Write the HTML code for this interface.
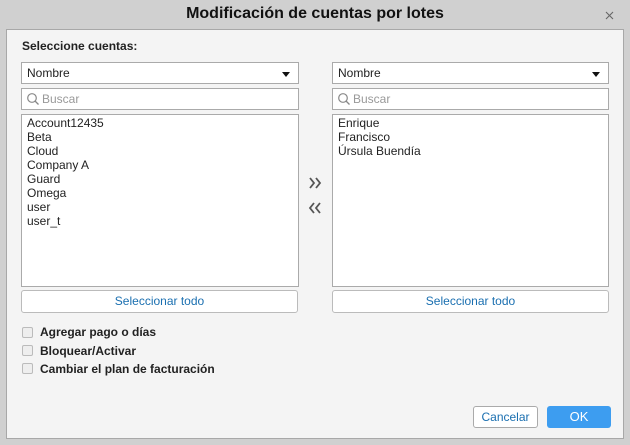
<!DOCTYPE html>
<html><head><style>
*{box-sizing:border-box;margin:0;padding:0}
body{width:630px;height:445px;background:#d0d0d0;font-family:"Liberation Sans",sans-serif;font-size:12px;color:#222;position:relative;overflow:hidden}
.abs{position:absolute}
.title{left:0;top:0;width:630px;height:29px;text-align:center;font-size:16px;font-weight:bold;line-height:28px;color:#111}
.panel{left:6px;top:29px;width:618px;height:410px;background:#f4f4f4;border:1px solid #a8a8a8}
.box{background:#fff;border:1px solid #aaa}
.dd{height:22px;line-height:20px;padding-left:5px}
.dd:after{content:"";position:absolute;right:8px;top:9px;border:4px solid transparent;border-top:5px solid #111;border-bottom:0}
.search{height:22px;line-height:20px;padding-left:20px;color:#999}
.list{height:173px;padding:1px 5px;line-height:14px}
.btn{height:23px;border:1px solid #bbb;border-radius:3px;background:#fff;color:#1a6fb0;text-align:center;line-height:21px}
.cb{width:11px;height:11px;border:1px solid #bbb;border-radius:2px;background:#eee}
.lbl{font-weight:bold;font-size:12px}
</style></head><body>
<div class="abs title">Modificación de cuentas por lotes</div>
<svg class="abs" style="left:605px;top:11px" width="9" height="9"><path d="M1 1L8 8M8 1L1 8" stroke="#666" stroke-width="1.1"/></svg>
<div class="abs panel"></div>
<div class="abs lbl" style="left:22px;top:39px">Seleccione cuentas:</div>

<div class="abs box dd" style="left:21px;top:62px;width:278px">Nombre</div>
<div class="abs box search" style="left:21px;top:88px;width:278px">Buscar</div>
<svg class="abs" style="left:26px;top:92px" width="14" height="14"><circle cx="6" cy="6" r="4.3" fill="none" stroke="#888" stroke-width="1.2"/><line x1="9" y1="9" x2="12.5" y2="12.5" stroke="#888" stroke-width="1.3"/></svg>
<div class="abs box list" style="left:21px;top:114px;width:278px">Account12435<br>Beta<br>Cloud<br>Company A<br>Guard<br>Omega<br>user<br>user_t</div>
<div class="abs btn" style="left:21px;top:290px;width:277px">Seleccionar todo</div>

<div class="abs box dd" style="left:332px;top:62px;width:277px">Nombre</div>
<div class="abs box search" style="left:332px;top:88px;width:277px">Buscar</div>
<svg class="abs" style="left:337px;top:92px" width="14" height="14"><circle cx="6" cy="6" r="4.3" fill="none" stroke="#888" stroke-width="1.2"/><line x1="9" y1="9" x2="12.5" y2="12.5" stroke="#888" stroke-width="1.3"/></svg>
<div class="abs box list" style="left:332px;top:114px;width:277px">Enrique<br>Francisco<br>Úrsula Buendía</div>
<div class="abs btn" style="left:332px;top:290px;width:277px">Seleccionar todo</div>

<svg class="abs" style="left:307px;top:176px" width="18" height="40"><path d="M3 2l4 5-4 5M9 2l4 5-4 5" fill="none" stroke="#555" stroke-width="1.8"/><path d="M7 27l-4 5 4 5M13 27l-4 5 4 5" fill="none" stroke="#555" stroke-width="1.8"/></svg>

<div class="abs cb" style="left:22px;top:327px"></div><div class="abs lbl" style="left:40px;top:325px">Agregar pago o días</div>
<div class="abs cb" style="left:22px;top:345px"></div><div class="abs lbl" style="left:40px;top:344px">Bloquear/Activar</div>
<div class="abs cb" style="left:22px;top:363px"></div><div class="abs lbl" style="left:40px;top:362px">Cambiar el plan de facturación</div>

<div class="abs btn" style="left:473px;top:406px;width:65px;height:22px;line-height:20px;border-color:#aaa">Cancelar</div>
<div class="abs" style="left:547px;top:406px;width:64px;height:22px;background:#3d9df0;border-radius:3px;color:#fff;text-align:center;line-height:22px;font-size:13px">OK</div>
</body></html>
